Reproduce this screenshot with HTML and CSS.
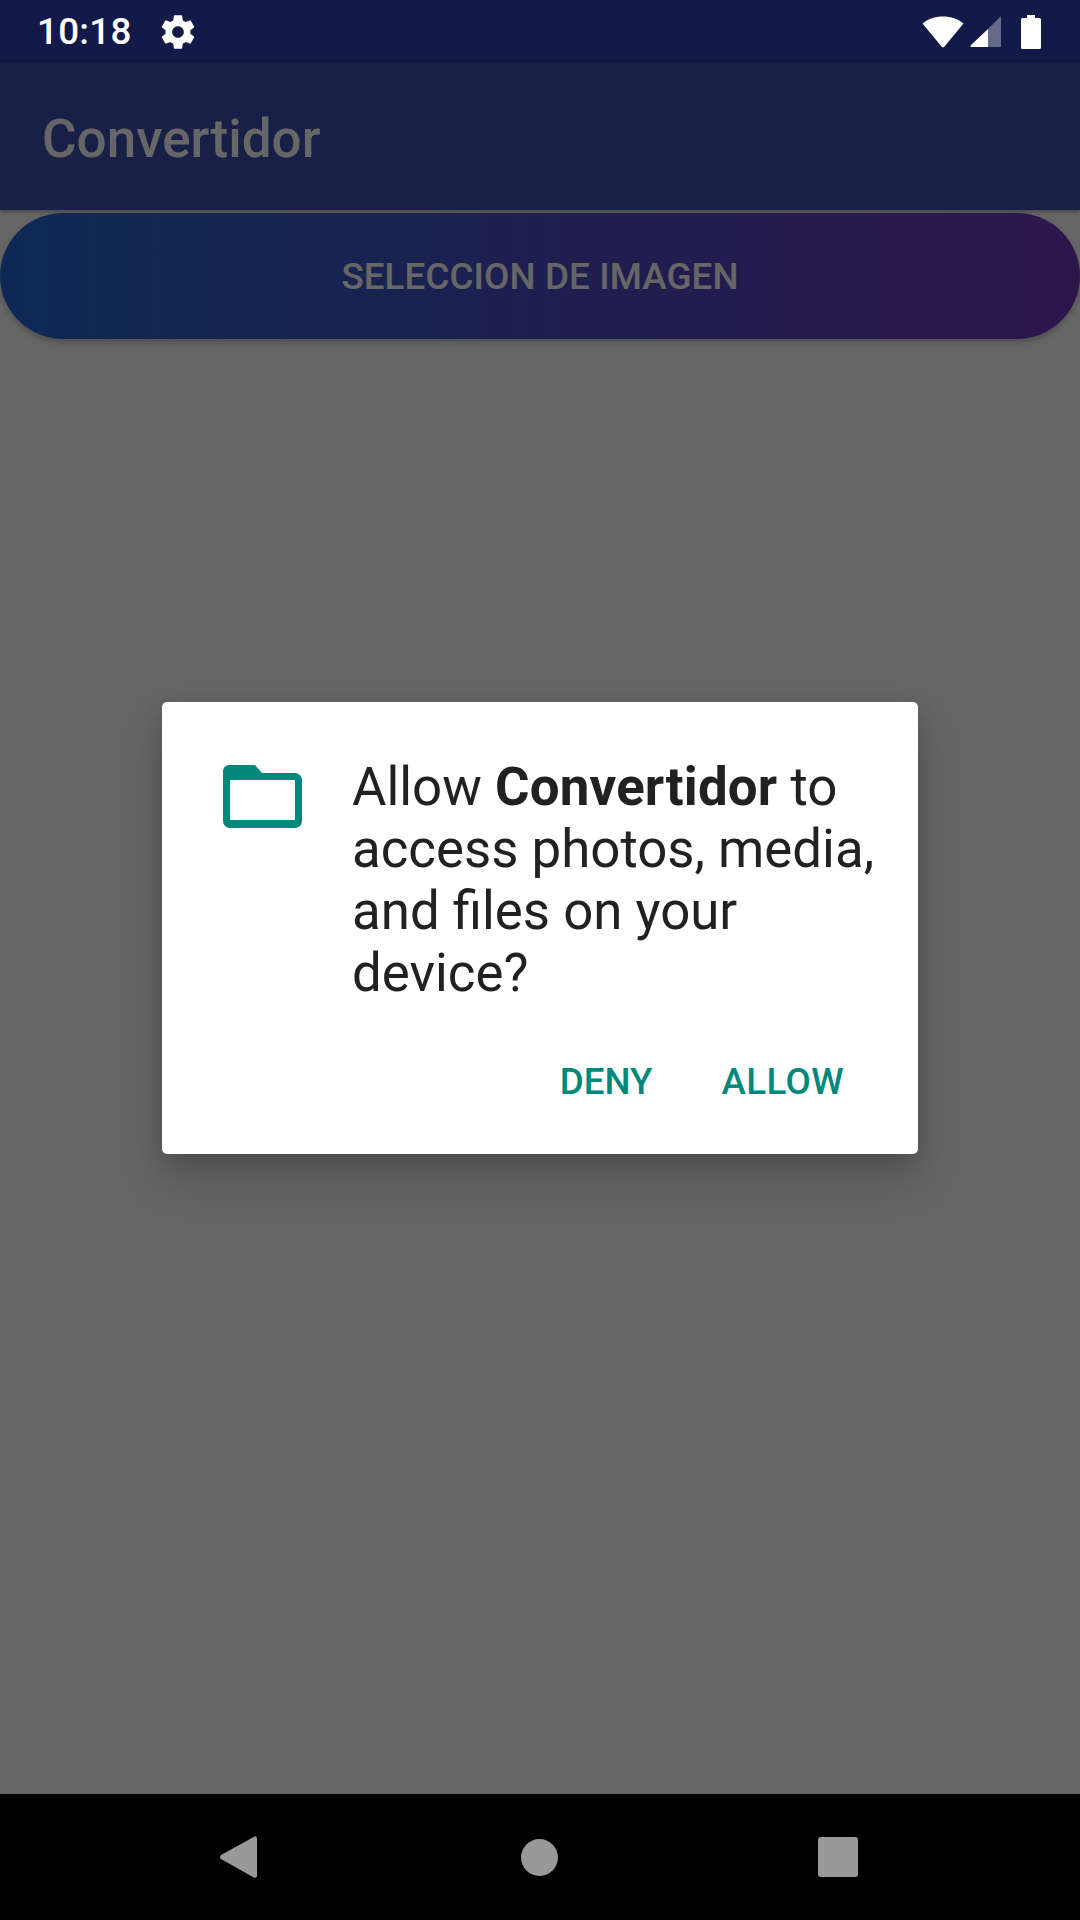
FILE: index.html
```html
<!DOCTYPE html>
<html lang="en">
  <head>
    <meta charset="UTF-8" />
    <meta name="viewport" content="width=device-width, initial-scale=1.0" />
    <title>Convertidor</title>
    <link rel="stylesheet" href="styles.css">
  </head>
  <body>
    <div class="status">
      <span class="time">10:18</span>
      <svg class="gear" viewBox="0 0 24 24"><path fill="#fff" fill-rule="evenodd" d="M19.43 12.98c.04-.32.07-.64.07-.98s-.03-.66-.07-.98l2.11-1.65c.19-.15.24-.42.12-.64l-2-3.46c-.12-.22-.39-.3-.61-.22l-2.49 1c-.52-.4-1.08-.73-1.69-.98l-.38-2.65C14.46 2.18 14.25 2 14 2h-4c-.25 0-.46.18-.49.42l-.38 2.65c-.61.25-1.17.59-1.69.98l-2.49-1c-.23-.09-.49 0-.61.22l-2 3.46c-.13.22-.07.49.12.64l2.11 1.65c-.04.32-.07.65-.07.98s.03.66.07.98l-2.11 1.65c-.19.15-.24.42-.12.64l2 3.46c.12.22.39.3.61.22l2.49-1c.52.4 1.08.73 1.69.98l.38 2.65c.03.24.24.42.49.42h4c.25 0 .46-.18.49-.42l.38-2.65c.61-.25 1.17-.59 1.69-.98l2.49 1c.23.09.49 0 .61-.22l2-3.46c.12-.22.07-.49-.12-.64l-2.11-1.65zM12 15.5c-1.93 0-3.5-1.57-3.5-3.5s1.57-3.5 3.5-3.5 3.5 1.57 3.5 3.5-1.57 3.5-3.5 3.5z"/></svg>
      <div class="status-right">
        <svg class="wifi" viewBox="0 0 42 32"><path fill="#fff" d="M0.5 7.5C6 3 13 0.500 21 0.500S36 3 41.500 7.500L22.500 30.500a2 2 0 0 1-3 0z"/></svg>
        <svg class="signal" viewBox="0 0 31 31"><path fill="#fff" fill-opacity="0.35" d="M31 0V31H18V13z"/><path fill="#fff" d="M18 13V31H1.500a1 1 0 0 1-.7-1.700z"/></svg>
        <svg class="battery" viewBox="0 0 20 34"><path fill="#fff" d="M6 0h8v3h4.500A1.500 1.500 0 0 1 20 4.500v28a1.500 1.500 0 0 1-1.500 1.500h-17A1.500 1.500 0 0 1 0 32.500v-28A1.500 1.500 0 0 1 1.500 3H6z"/></svg>
      </div>
    </div>

    <div class="app">
      <div class="toolbar">Convertidor</div>
      <div class="content">
        <div class="pick-btn">SELECCION DE IMAGEN</div>
      </div>

      <div class="scrim">
        <div class="dialog">
          <div class="dialog-body">
            <svg class="folder" viewBox="0 0 79 63"><path fill="#00897b" fill-rule="evenodd" d="M6 0h26l7 8h33a7 7 0 0 1 7 7v41a7 7 0 0 1-7 7H7a7 7 0 0 1-7-7V6a6 6 0 0 1 6-6zM7 15v40h65V15z"/></svg>
            <p class="message">Allow <b>Convertidor</b> to access photos, media, and files on your device?</p>
          </div>
          <div class="actions">
            <span class="action">DENY</span>
            <span class="action action-allow">ALLOW</span>
          </div>
        </div>
      </div>
    </div>

    <div class="navbar">
      <svg class="nav-back" viewBox="0 0 37 42"><path fill="#999" d="M35 0.300a2 2 0 0 1 2 1.700v38a2 2 0 0 1-3.200 1.400L1 23a2.500 2.500 0 0 1 0-4z"/></svg>
      <div class="nav-home"></div>
      <div class="nav-recent"></div>
    </div>
  </body>
</html>
```

FILE: styles.css
```css
* {
  padding: 0;
  margin: 0;
  box-sizing: border-box;
}
body {
  width: 1080px;
  height: 1920px;
  display: flex;
  flex-direction: column;
  background-color: #000;
  font-family: Roboto, "Liberation Sans", sans-serif;
  overflow: hidden;
}

/* status bar */
.status {
  display: flex;
  align-items: center;
  height: 63px;
  padding: 0 39px 0 37px;
  background-color: #141a47;
  color: #fff;
}
.time {
  font-size: 36.75px;
  font-weight: 500;
  letter-spacing: 0.3px;
}
.gear {
  width: 40px;
  height: 40px;
  margin-left: 26px;
}
.status-right {
  display: flex;
  align-items: center;
  gap: 20px;
  margin-left: auto;
}
.wifi {
  width: 42px;
  height: 32px;
}
.signal {
  width: 31px;
  height: 31px;
  margin-left: -14px;
}
.battery {
  width: 20px;
  height: 34px;
}

/* app under the scrim */
.app {
  position: relative;
  height: 1731px;
  background-color: #fff;
}
.toolbar {
  height: 147px;
  padding-left: 42px;
  line-height: 152px;
  font-size: 53px;
  font-weight: 500;
  color: #fff;
  background-color: #3f51b5;
  box-shadow: 0 2px 4px rgba(0, 0, 0, 0.3);
}
.content {
  padding-top: 3px;
}
.pick-btn {
  height: 126px;
  line-height: 128px;
  border-radius: 63px;
  text-align: center;
  font-size: 36.75px;
  font-weight: 500;
  letter-spacing: 0.1px;
  color: #fff;
  background: linear-gradient(90deg, #2168d0, #7338bc);
  box-shadow: 0 3px 6px rgba(0, 0, 0, 0.25);
}

/* permission dialog */
.scrim {
  position: absolute;
  top: 0;
  left: 0;
  right: 0;
  bottom: 0;
  display: flex;
  align-items: center;
  justify-content: center;
  padding-bottom: 1px;
  background-color: rgba(0, 0, 0, 0.6);
}
.dialog {
  width: 756px;
  height: 452px;
  padding: 54px 0 0 61px;
  background-color: #fff;
  border-radius: 5px;
  box-shadow: 0 24px 48px rgba(0, 0, 0, 0.18), 0 8px 20px rgba(0, 0, 0, 0.12);
}
.dialog-body {
  display: flex;
  align-items: flex-start;
}
.folder {
  flex: none;
  width: 79px;
  height: 63px;
  margin-top: 9px;
}
.message {
  width: 530px;
  margin-left: 50px;
  font-size: 52.8px;
  line-height: 62px;
  color: #212121;
}
.message b {
  font-weight: 700;
  letter-spacing: 0.2px;
}
.actions {
  display: flex;
  justify-content: flex-end;
  gap: 69px;
  margin-top: 56px;
  padding-right: 74px;
}
.action {
  font-size: 36.75px;
  font-weight: 500;
  color: #00897b;
}
.action-allow {
  letter-spacing: 0.4px;
}

/* nav bar */
.navbar {
  position: relative;
  flex: 1;
  background-color: #000;
  display: flex;
  align-items: center;
  padding-left: 220px;
}
.nav-back {
  width: 37px;
  height: 42px;
}
.nav-home {
  width: 37px;
  height: 37px;
  margin-left: 264px;
  border-radius: 50%;
  background-color: #999;
}
.nav-recent {
  width: 40px;
  height: 40px;
  margin-left: 260px;
  border-radius: 3px;
  background-color: #999;
}
```
